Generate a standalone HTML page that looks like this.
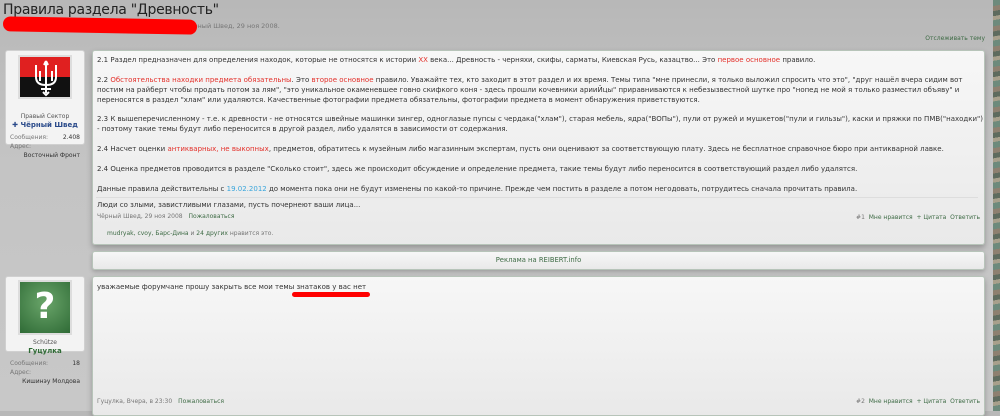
<!DOCTYPE html>
<html><head><meta charset="utf-8"><style>
*{margin:0;padding:0;box-sizing:border-box}
body{width:1000px;height:411px;overflow:hidden;background:linear-gradient(#b8b8b8,#c4c4c4 40%,#c8c8c8);font-family:"DejaVu Sans","Liberation Sans",sans-serif;color:#333;position:relative}
.camo{position:absolute;right:0;top:0;width:7px;height:411px;background:repeating-linear-gradient(170deg,#6d8a7c 0 6px,#8e8070 6px 11px,#5e6b5e 11px 16px,#a8a08c 16px 20px)}
.t{position:absolute;white-space:nowrap}
h1{position:absolute;left:3px;top:2px;font:normal 14px "DejaVu Sans",sans-serif;color:#222;letter-spacing:-0.3px}
.box{position:absolute;background:linear-gradient(#f7f7f7,#e9e9e9);border:1px solid #b7c4b9;border-radius:3px;box-shadow:0 3px 6px rgba(0,0,0,.25)}
.msg{font-size:7px;line-height:10px;color:#333}
.red{color:#e3312b}.blue{color:#3aa6dc}.grn{color:#3e6b45}
.small{font-size:6px;color:#777}
.ub{position:absolute;background:#f3f3f3;border-radius:3px;border:1px solid #d0d0d0}
</style></head><body>
<div class="camo"></div>
<h1>Правила раздела "Древность"</h1>
<div class="t" style="left:150px;top:22px;font-size:6.5px;color:#777">Шаблон 1 чёрный Швед, 29 ноя 2008.</div>
<div style="position:absolute;left:3px;top:18px;width:194px;height:15px;background:#f00;border-radius:8px;transform:rotate(1deg)"></div>
<div class="t grn" style="right:15px;top:35px;font-size:6px">Отслеживать тему</div>

<!-- user 1 -->
<div class="ub" style="left:5px;top:50px;width:80px;height:95px"></div>
<div style="position:absolute;left:18px;top:55px;width:54px;height:44px;border:2px solid #ddd;overflow:hidden">
<div style="height:50%;background:#e02020"></div><div style="height:50%;background:#111"></div>
<svg style="position:absolute;left:10px;top:2px" width="32" height="38" viewBox="0 0 32 38" fill="none" stroke="#fff" stroke-width="2"><path d="M16 2v32M16 2l-2 4M16 2l2 4M6 6v12q0 8 10 8q10 0 10-8V6M10 12v10M22 12v10M11 30h10M13 33l3 3 3-3"/></svg></div>
<div class="t" style="left:5px;top:113px;width:80px;text-align:center;font-size:6px;color:#555">Правый Сектор</div>
<div class="t" style="left:5px;top:121px;width:80px;text-align:center;font-size:7px;color:#2a4a8a;font-weight:bold">✚ Чёрный Швед</div>
<div class="t small" style="left:10px;top:134px">Сообщения:</div><div class="t small" style="right:920px;top:134px;color:#333">2.408</div>
<div class="t small" style="left:10px;top:143px">Адрес:</div>
<div class="t small" style="right:920px;top:152px;color:#333">Восточный Фронт</div>

<div class="box" style="left:92px;top:50px;width:893px;height:195px"></div>
<div class="msg t" style="left:97px;top:55px">2.1 Раздел предназначен для определения находок, которые не относятся к истории <span class="red">XX</span> века... Древность - черняхи, скифы, сарматы, Киевская Русь, казацтво... Это <span class="red">первое основное</span> правило.</div>
<div class="msg t" style="left:97px;top:75px">2.2 <span class="red">Обстоятельства находки предмета обязательны</span>. Это <span class="red">второе основное</span> правило. Уважайте тех, кто заходит в этот раздел и их время. Темы типа "мне принесли, я только выложил спросить что это", "друг нашёл вчера сидим вот<br>постим на райберт чтобы продать потом за лям", "это уникальное окаменевшее говно скифкого коня - здесь прошли кочевники арииЙцы" приравниваются к небезызвестной шутке про "нопед не мой я только разместил объяву" и<br>переносятся в раздел "хлам" или удаляются. Качественные фотографии предмета обязательны, фотографии предмета в момент обнаружения приветствуются.</div>
<div class="msg t" style="left:97px;top:114px">2.3 К вышеперечисленному - т.е. к древности - не относятся швейные машинки зингер, одноглазые пупсы с чердака("хлам"), старая мебель, ядра("ВОПы"), пули от ружей и мушкетов("пули и гильзы"), каски и пряжки по ПМВ("находки")<br>- поэтому такие темы будут либо переносится в другой раздел, либо удалятся в зависимости от содержания.</div>
<div class="msg t" style="left:97px;top:144px">2.4 Насчет оценки <span class="red">антикварных, не выкопных</span>, предметов, обратитесь к музейным либо магазинным экспертам, пусть они оценивают за соответствующую плату. Здесь не бесплатное справочное бюро при антикварной лавке.</div>
<div class="msg t" style="left:97px;top:164px">2.4 Оценка предметов проводится в разделе "Сколько стоит", здесь же происходит обсуждение и определение предмета, такие темы будут либо переносится в соответствующий раздел либо удалятся.</div>
<div class="msg t" style="left:97px;top:184px">Данные правила действительны с <span class="blue">19.02.2012</span> до момента пока они не будут изменены по какой-то причине. Прежде чем постить в разделе а потом негодовать, потрудитесь сначала прочитать правила.</div>
<div style="position:absolute;left:96px;top:197px;width:882px;height:1px;background:#fff;border-top:1px solid #ddd"></div>
<div class="msg t" style="left:97px;top:200px">Люди со злыми, завистливыми глазами, пусть почернеют ваши лица...</div>
<div class="t small" style="left:97px;top:213px">Чёрный Швед, 29 ноя 2008 <span class="grn" style="margin-left:4px">Пожаловаться</span></div>
<div class="t small" style="right:20px;top:214px">#1 &nbsp;<span class="grn">Мне нравится &nbsp;+ Цитата &nbsp;Ответить</span></div>
<div class="t small" style="left:107px;top:230px"><span class="grn">mudryak, cvoy, Барс-Дина</span> и <span class="grn">24 других</span> нравится это.</div>

<div class="box" style="left:92px;top:251px;width:893px;height:19px;box-shadow:0 2px 4px rgba(0,0,0,.2)"></div>
<div class="t grn" style="left:92px;width:893px;text-align:center;top:256px;font-size:6.8px">Реклама на REIBERT.info</div>

<!-- user 2 -->
<div class="ub" style="left:5px;top:276px;width:80px;height:76px"></div>
<div style="position:absolute;left:18px;top:280px;width:54px;height:55px;border:2px solid #ddd;background:radial-gradient(circle at 50% 40%,#6aa56a,#2f6b36);color:#fff;font:bold 36px 'DejaVu Sans',sans-serif;text-align:center;line-height:50px">?</div>
<div class="t" style="left:5px;top:339px;width:80px;text-align:center;font-size:6px;color:#555">Schütze</div>
<div class="t" style="left:5px;top:347px;width:80px;text-align:center;font-size:7px;color:#2e6a34;font-weight:bold">Гуцулка</div>
<div class="t small" style="left:10px;top:360px">Сообщения:</div><div class="t small" style="right:920px;top:360px;color:#333">18</div>
<div class="t small" style="left:10px;top:369px">Адрес:</div>
<div class="t small" style="right:920px;top:378px;color:#333">Кишинэу Молдова</div>

<div class="box" style="left:92px;top:276px;width:893px;height:140px"></div>
<div class="msg t" style="left:97px;top:282px">уважаемые форумчане прошу закрыть все мои темы знатаков у вас нет</div>
<div style="position:absolute;left:292px;top:292px;width:78px;height:5px;background:#f00;border-radius:3px"></div>
<div class="t small" style="left:97px;top:398px">Гуцулка, Вчера, в 23:30 <span class="grn" style="margin-left:4px">Пожаловаться</span></div>
<div class="t small" style="right:20px;top:398px">#2 &nbsp;<span class="grn">Мне нравится &nbsp;+ Цитата &nbsp;Ответить</span></div>
</body></html>
